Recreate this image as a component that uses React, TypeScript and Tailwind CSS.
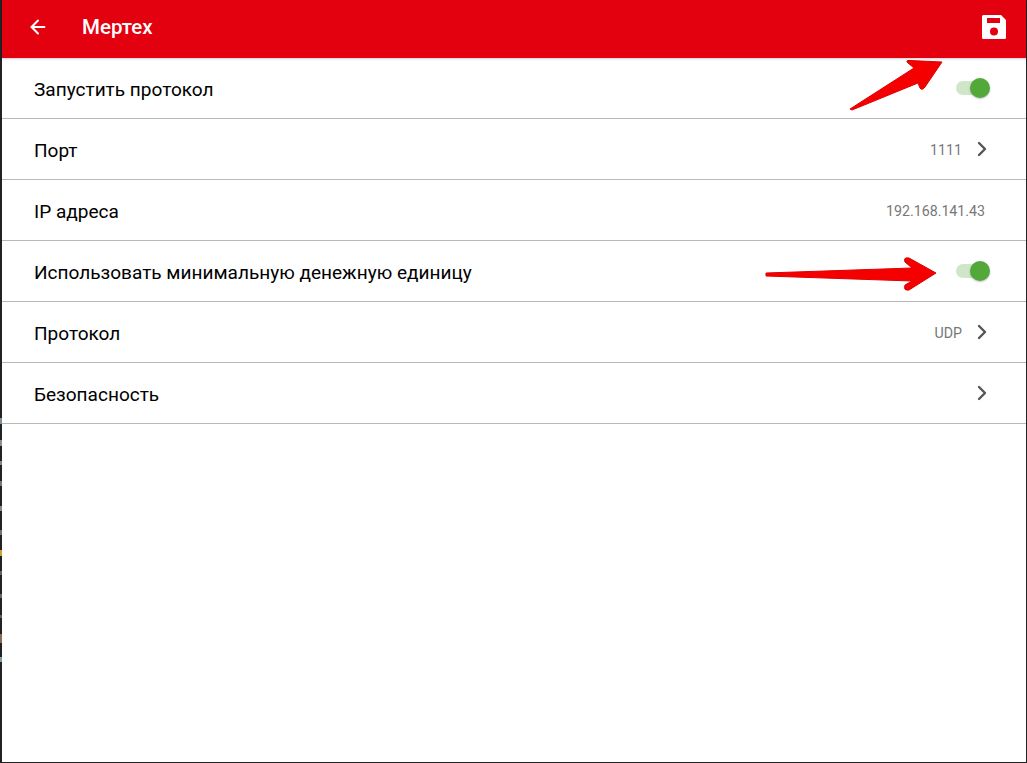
import React from "react";
import { ArrowLeft, ChevronRight } from "lucide-react";

const font = "font-['Roboto','Liberation_Sans',sans-serif]";

const edgeMarks: [number, number, string][] = [
  [418, 6, "#7f929a"], [440, 6, "#8f8f8a"], [461, 4, "#85857a"], [481, 5, "#777"], [506, 5, "#888"],
  [530, 5, "#70707c"], [550, 6, "#c9a335"], [571, 4, "#5f5f70"], [594, 4, "#666"], [615, 3, "#5f5f5f"],
  [634, 9, "#8a6a50"], [657, 5, "#8499a1"],
];

function Toggle() {
  return (
    <div className="relative h-[20px] w-[36px]">
      <div className="absolute left-[1px] top-[3px] h-[14px] w-[30px] rounded-full bg-[#cfe6c8]" />
      <div className="absolute left-[15px] top-0 h-[20px] w-[20px] rounded-full bg-[#53a83a] shadow-[0_1px_2px_rgba(0,0,0,0.25)]" />
    </div>
  );
}

function Row({ label, value, chevron, toggle }: { label: string; value?: string; chevron?: boolean; toggle?: boolean }) {
  return (
    <div className="flex h-[61px] items-center border-b border-[#b8b8b8] pl-[32px] pr-[35px]">
      <span className="flex-1 pt-[3px] text-[19.05px] leading-none text-black">{label}</span>
      {value && (
        <span className={`pt-[2px] text-[14.2px] leading-none text-[#777] ${chevron ? "mr-[8px]" : "mr-[6px]"}`}>{value}</span>
      )}
      {chevron && <ChevronRight className="mr-[-3px] h-[24px] w-[24px] text-[#555]" strokeWidth={2.4} />}
      {toggle && <Toggle />}
    </div>
  );
}

export default function App() {
  return (
    <div className={`relative flex h-[763px] w-full flex-col overflow-hidden bg-[#222] pb-[1px] pl-[2px] pr-[1px] ${font}`}>
      <div className="flex flex-1 flex-col bg-white">
        <header className="flex h-[58px] shrink-0 items-center bg-[#e3000f] pb-[3px] pl-[24px] pr-[19px] shadow-[0_1px_2px_rgba(0,0,0,0.2)]">
          <ArrowLeft className="mb-[2px] ml-[1px] h-[22px] w-[22px] text-white" strokeWidth={2.2} />
          <span className="ml-[33px] flex-1 text-[20.5px] font-medium leading-none text-white">Мертех</span>
          <svg width="26" height="26" viewBox="0 0 26 26" className="mb-[2px]">
            <path
              fill="#fff"
              fillRule="evenodd"
              d="M2.5 1h17.5l5 5v17.5a1.5 1.5 0 0 1-1.5 1.5h-21a1.5 1.5 0 0 1-1.5-1.5v-21a1.5 1.5 0 0 1 1.5-1.5zM6 4v5h13V4z"
            />
            <circle cx="13" cy="17.5" r="4" fill="#e3000f" />
          </svg>
        </header>
        <div>
          <Row label="Запустить протокол" toggle />
          <Row label="Порт" value="1111" chevron />
          <Row label="IP адреса" value="192.168.141.43" />
          <Row label="Использовать минимальную денежную единицу" toggle />
          <Row label="Протокол" value="UDP" chevron />
          <Row label="Безопасность" chevron />
        </div>
      </div>

      <svg className="pointer-events-none absolute left-0 top-0" width="1027" height="763" viewBox="0 0 1027 763">
        {edgeMarks.map(([y, h, c]) => (
          <rect key={y} x="0" y={y} width="2" height={h} fill={c} />
        ))}
        <path
          d="M850 109 L914 68 L908 63 Q905 60 910 60.5 L942 62 L925 87 Q922 91 920 88 L918 83 L852 110 Z"
          fill="#f50000"
          stroke="#e00000"
          strokeWidth="1"
          strokeLinejoin="round"
        />
        <path
          d="M766 273 L912 268 L905 262 Q903 257 909 258 L936 273 L909 290 Q903 291 905 285 L912 281 L766 276 Z"
          fill="#f50000"
          stroke="#e00000"
          strokeWidth="1"
          strokeLinejoin="round"
        />
      </svg>
    </div>
  );
}
